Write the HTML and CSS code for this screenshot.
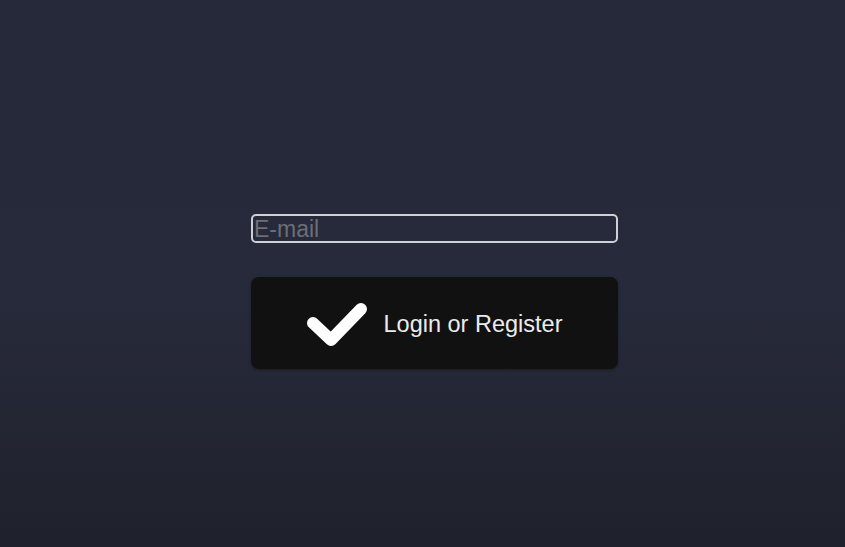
FILE: index.html
```html
<!DOCTYPE html>
<html lang="en">
<head>
<meta charset="utf-8">
<title>Login</title>
<link rel="stylesheet" href="styles.css">
</head>
<body>
<main class="page">
  <form class="login" onsubmit="return false">
    <input class="email" type="email" placeholder="E-mail">
    <button class="submit" type="submit">
      <svg class="check" width="60" height="46" viewBox="0 0 60 46" aria-hidden="true">
        <path d="M6 22 L24 39 L54 8" fill="none" stroke="#ffffff" stroke-width="12" stroke-linecap="round" stroke-linejoin="round"/>
      </svg>
      <span class="label">Login or Register</span>
    </button>
  </form>
</main>
</body>
</html>
```

FILE: styles.css
```css
html, body {
  margin: 0;
  height: 100%;
}
body {
  background: linear-gradient(180deg, #262939 0%, #272a3a 55%, #1f212c 100%);
  font-family: "Liberation Sans", Arial, sans-serif;
}
.page {
  padding: 214px 0 0 251px;
}
.login {
  width: 367px;
  display: flex;
  flex-direction: column;
  gap: 34px;
}
.email {
  box-sizing: border-box;
  width: 100%;
  height: 29px;
  margin: 0;
  padding: 1px 1px 0;
  border: 2px solid #cfd0d6;
  border-radius: 5px;
  background: transparent;
  color: #dddddd;
  font-family: "Liberation Sans", Arial, sans-serif;
  font-size: 23px;
  line-height: 24px;
  outline: none;
}
.email::placeholder {
  color: #6c6e78;
}
.submit {
  box-sizing: border-box;
  width: 100%;
  height: 92px;
  margin: 0;
  border: none;
  border-radius: 8px;
  background: #111112;
  color: #ebebeb;
  display: flex;
  align-items: center;
  justify-content: center;
  gap: 17px;
  font-family: "Liberation Sans", Arial, sans-serif;
  font-size: 23.5px;
  cursor: pointer;
  box-shadow: 0 1px 3px rgba(0, 0, 0, 0.3);
}
.check {
  display: block;
  margin-top: 1px;
}
.label {
  display: block;
  margin-top: 2px;
}
```
